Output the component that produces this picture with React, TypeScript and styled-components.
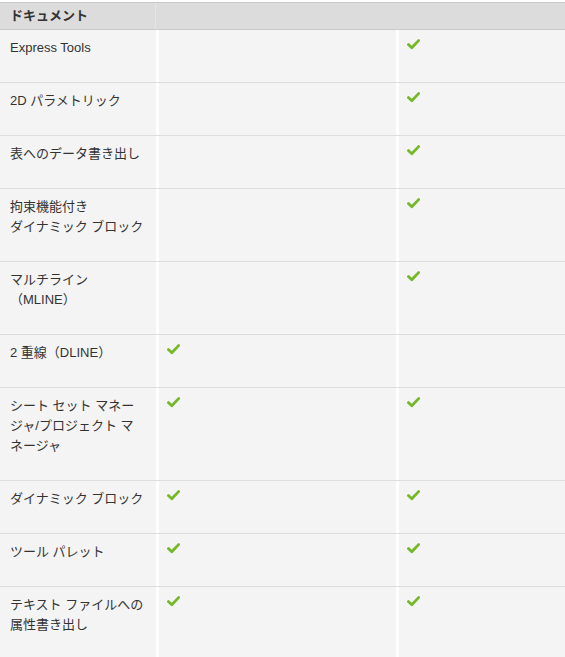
import React from "react";
import styled, { createGlobalStyle } from "styled-components";

const Global = createGlobalStyle`
  html, body { margin: 0; padding: 0; background: #ffffff; }
  body {
    font-family: "Liberation Sans", "Noto Sans CJK JP", Arial, sans-serif;
    font-size: 13px;
    color: #333333;
  }
`;

const Table = styled.div`
  display: flex;
  flex-direction: column;
  width: 565px;
  padding-top: 2px;
`;

const HeaderRow = styled.div`
  display: grid;
  grid-template-columns: 155px 1fr;
  column-gap: 1px;
  background: #e6e6e6;
  border-top: 1px solid #c9c9c9;
  border-bottom: 1px solid #c9c9c9;
`;

const HeaderCell = styled.div`
  background: #dcdcdc;
  height: 26px;
  line-height: 26px;
  padding-left: 10px;
  font-weight: bold;
`;

const Row = styled.div`
  display: grid;
  grid-template-columns: 156px 237px 1fr;
  column-gap: 3px;
  background: #ffffff;
  border-bottom: 1px solid #dddddd;
`;

const Cell = styled.div`
  background: #f4f4f4;
  padding: 8px 10px 24px 10px;
  line-height: 20px;
  min-height: 20px;
`;

const CheckCell = styled(Cell)`
  padding: 6px 8px 0 8px;
`;

const Check = () => (
  <svg width="13" height="11" viewBox="0 0 13 11">
    <path
      d="M1.4 5.6 L4.8 8.8 L11.6 1.6"
      fill="none"
      stroke="#76b82a"
      strokeWidth="2.8"
      strokeLinecap="round"
      strokeLinejoin="round"
    />
  </svg>
);

type Item = { label: React.ReactNode; a: boolean; b: boolean };

const items: Item[] = [
  { label: "Express Tools", a: false, b: true },
  { label: "2D パラメトリック", a: false, b: true },
  { label: "表へのデータ書き出し", a: false, b: true },
  { label: <>拘束機能付き<br />ダイナミック ブロック</>, a: false, b: true },
  { label: <>マルチライン<br />（MLINE）</>, a: false, b: true },
  { label: "2 重線（DLINE）", a: true, b: false },
  { label: <>シート セット マネー<br />ジャ/プロジェクト マ<br />ネージャ</>, a: true, b: true },
  { label: "ダイナミック ブロック", a: true, b: true },
  { label: "ツール パレット", a: true, b: true },
  { label: <>テキスト ファイルへの<br />属性書き出し</>, a: true, b: true },
];

export default function App() {
  return (
    <>
      <Global />
      <Table>
        <HeaderRow>
          <HeaderCell>ドキュメント</HeaderCell>
          <HeaderCell />
        </HeaderRow>
        {items.map((it, i) => (
          <Row key={i}>
            <Cell>{it.label}</Cell>
            <CheckCell>{it.a && <Check />}</CheckCell>
            <CheckCell>{it.b && <Check />}</CheckCell>
          </Row>
        ))}
      </Table>
    </>
  );
}
